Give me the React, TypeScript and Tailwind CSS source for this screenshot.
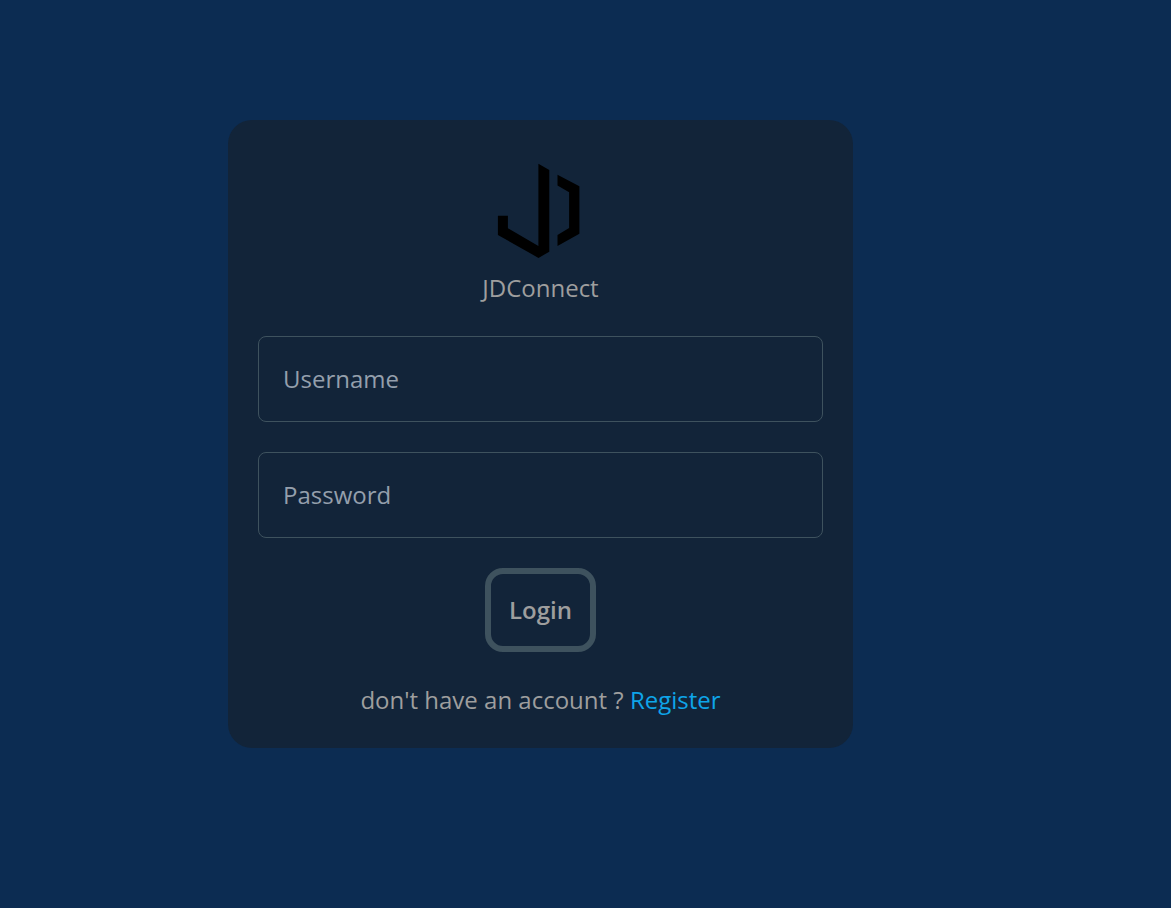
import React from "react";

function Logo() {
  return (
    <svg viewBox="0 0 96 96" className="size-24" role="img" aria-label="JDConnect logo" fill="#000">
      <path d="M45.400 1.800 56.300 8v81.700L45.500 95.900 4.900 73V53.700h10v12.600L45.400 84z" />
      <path d="M64.500 12.700 86.400 24.300v47.400L64.500 84V73l11.600-7V30.300L64.500 23.400z" />
    </svg>
  );
}

function Field({ id, label, type }: { id: string; label: string; type: string }) {
  return (
    <input
      id={id}
      type={type}
      aria-label={label}
      placeholder={label}
      className="block w-full rounded-lg border border-[#3e525e] bg-transparent p-6 leading-9 text-[#9e9e9e] outline-none placeholder:text-[#949fac]"
    />
  );
}

export default function App() {
  return (
    <main className="min-h-screen bg-[#0c2c52] px-5 pt-[120px] pb-40 font-['Open_Sans',sans-serif] text-2xl leading-9 text-[#9e9e9e]">
      <form
        className="mx-auto flex w-full max-w-[625px] flex-col gap-[30px] rounded-3xl bg-[#122439] px-[30px] pt-[42px] pb-[30px] lg:ml-[208px]"
        onSubmit={(e) => e.preventDefault()}
      >
        <header className="flex flex-col items-center gap-3">
          <Logo />
          <h1>JDConnect</h1>
        </header>
        <Field id="username" label="Username" type="text" />
        <Field id="password" label="Password" type="password" />
        <button type="submit" className="self-center rounded-[18px] border-6 border-[#3e525e] p-[18px] font-semibold">
          Login
        </button>
        <p className="text-center">
          don't have an account ? <a href="#register" className="text-[#0ea5e9]">Register</a>
        </p>
      </form>
    </main>
  );
}
